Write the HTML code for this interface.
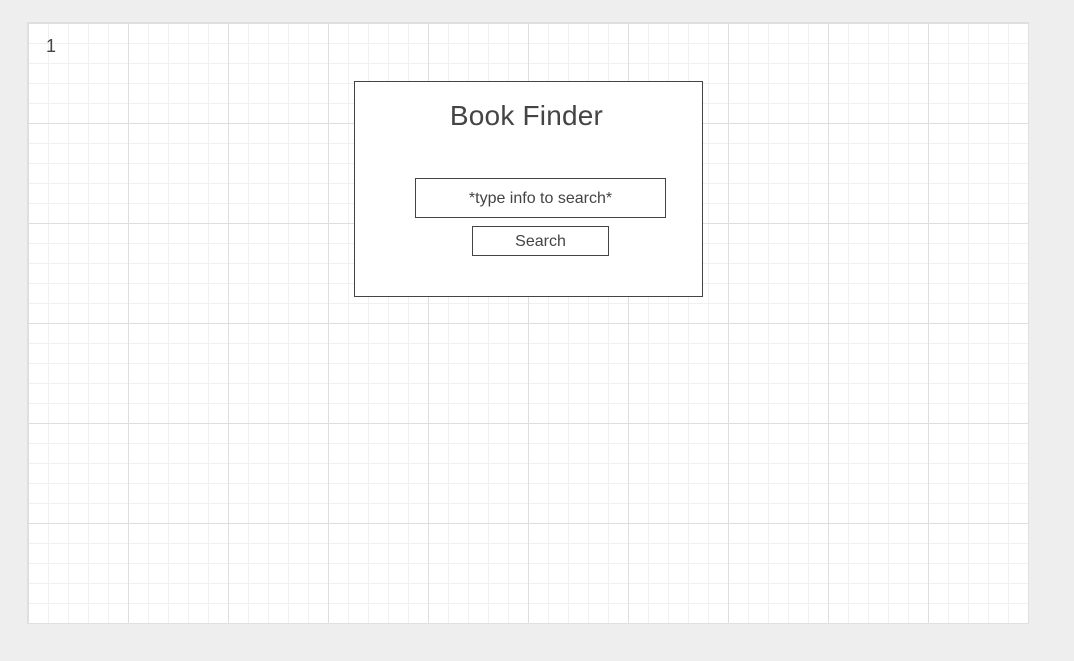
<!DOCTYPE html>
<html><head><style>
html,body{margin:0;padding:0;background:#eeeeee;width:1074px;height:661px;overflow:hidden;font-family:"Liberation Sans",sans-serif;}
#c{position:absolute;left:27px;top:22px;width:1000px;height:600px;border:1px solid #e0e0e0;
background-color:#fff;
background-image:
linear-gradient(to right,#dedede 1px,transparent 1px),
linear-gradient(to bottom,#dedede 1px,transparent 1px),
linear-gradient(to right,#f0f0f0 1px,transparent 1px),
linear-gradient(to bottom,#f0f0f0 1px,transparent 1px);
background-size:100px 100px,100px 100px,20px 20px,20px 20px;
background-position:0 0,0 0,0 0,0 0;}
.t{position:absolute;color:#444;}
#box{position:absolute;left:354px;top:81px;width:347px;height:214px;border:1px solid #444;background:#fff;}
#inp{position:absolute;left:415px;top:178px;width:249px;height:38px;border:1px solid #444;background:#fff;text-align:center;line-height:40px;font-size:16px;color:#444;}
#btn{position:absolute;left:472px;top:226px;width:135px;height:28px;border:1px solid #444;background:#fff;text-align:center;line-height:30px;font-size:16px;color:#444;}
</style></head><body>
<div id="c"></div>
<div class="t" style="left:46px;top:36px;font-size:18px;">1</div>
<div id="box"></div>
<div class="t" style="left:351px;width:351px;top:100px;text-align:center;font-size:28px;letter-spacing:0.2px;">Book Finder</div>
<div id="inp">*type info to search*</div>
<div id="btn">Search</div>
</body></html>
